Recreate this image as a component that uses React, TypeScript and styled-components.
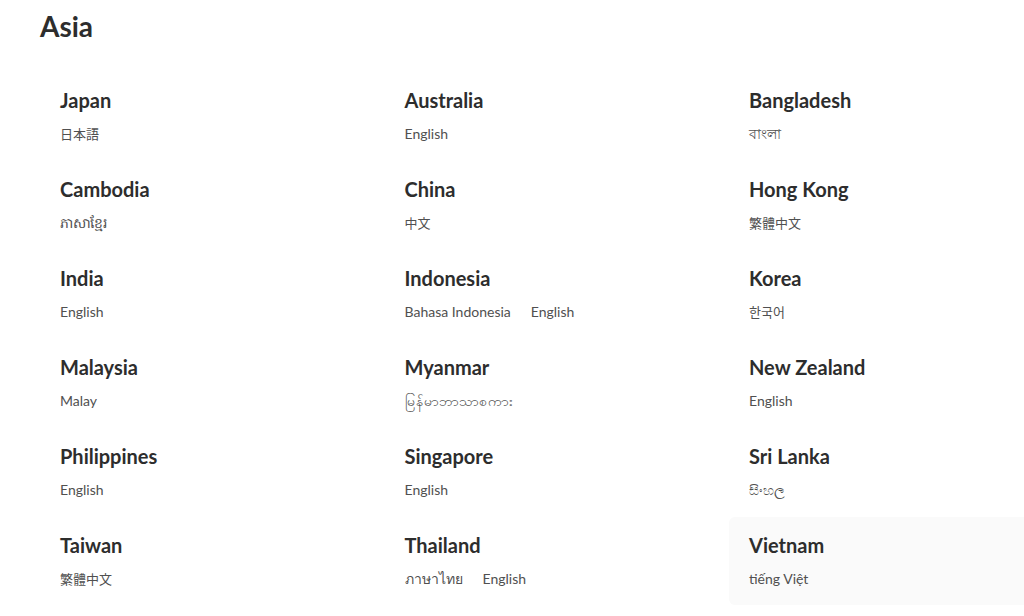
import React, { FC } from 'react';
import styled, { createGlobalStyle } from 'styled-components';

const GlobalStyle = createGlobalStyle`
  html, body {
    margin: 0;
    padding: 0;
    background: #fff;
    overflow: hidden;
  }
  body {
    font-family: Lato, "Noto Sans", "Noto Sans CJK JP", "DejaVu Sans", sans-serif;
    color: #333;
  }
`;

interface Country {
  name: string;
  languages: string[];
  active?: boolean;
}

const COUNTRIES: Country[] = [
  { name: 'Japan', languages: ['日本語'] },
  { name: 'Australia', languages: ['English'] },
  { name: 'Bangladesh', languages: ['বাংলা'] },
  { name: 'Cambodia', languages: ['ភាសាខ្មែរ'] },
  { name: 'China', languages: ['中文'] },
  { name: 'Hong Kong', languages: ['繁體中文'] },
  { name: 'India', languages: ['English'] },
  { name: 'Indonesia', languages: ['Bahasa Indonesia', 'English'] },
  { name: 'Korea', languages: ['한국어'] },
  { name: 'Malaysia', languages: ['Malay'] },
  { name: 'Myanmar', languages: ['မြန်မာဘာသာစကား'] },
  { name: 'New Zealand', languages: ['English'] },
  { name: 'Philippines', languages: ['English'] },
  { name: 'Singapore', languages: ['English'] },
  { name: 'Sri Lanka', languages: ['සිංහල'] },
  { name: 'Taiwan', languages: ['繁體中文'] },
  { name: 'Thailand', languages: ['ภาษาไทย', 'English'] },
  { name: 'Vietnam', languages: ['tiếng Việt'], active: true },
];

const Page = styled.div`
  width: 1024px;
  height: 616px;
  padding: 0 40px;
  box-sizing: border-box;
  overflow: hidden;
`;

const RegionTitle = styled.h1`
  margin: 0;
  padding-top: 9px;
  height: 72px;
  box-sizing: border-box;
  font-size: 28px;
  line-height: 34px;
  font-weight: 700;
  color: #2d2d2d;
`;

const Grid = styled.div`
  display: grid;
  grid-template-columns: repeat(3, 344.5px);
  grid-auto-rows: 89px;
`;

const Cell = styled.a<{ $active?: boolean }>`
  display: block;
  padding: 17px 20px 0;
  border-radius: 6px;
  text-decoration: none;
  background: ${(p) => (p.$active ? '#fafafa' : 'transparent')};
  height: 88px;
  box-sizing: border-box;
`;

const CountryName = styled.div`
  font-size: 20px;
  line-height: 22px;
  font-weight: 700;
  color: #2d2d2d;
`;

const Languages = styled.div`
  display: flex;
  gap: 20px;
  margin-top: 13px;
`;

const Language = styled.span<{ $cjk?: boolean }>`
  font-size: ${(p) => (p.$cjk ? '13px' : '14px')};
  line-height: 20px;
  color: #505050;
`;

const isCjk = (s: string) => /[\u3040-\u30ff\u4e00-\u9fff\uac00-\ud7af]/.test(s);

const CountryCell: FC<{ country: Country }> = ({ country }) => (
  <Cell href="#" $active={country.active}>
    <CountryName>{country.name}</CountryName>
    <Languages>
      {country.languages.map((l) => (
        <Language key={l} $cjk={isCjk(l)}>
          {l}
        </Language>
      ))}
    </Languages>
  </Cell>
);

export default function App() {
  return (
    <>
      <GlobalStyle />
      <Page>
        <RegionTitle>Asia</RegionTitle>
        <Grid>
          {COUNTRIES.map((c) => (
            <CountryCell key={c.name} country={c} />
          ))}
        </Grid>
      </Page>
    </>
  );
}
